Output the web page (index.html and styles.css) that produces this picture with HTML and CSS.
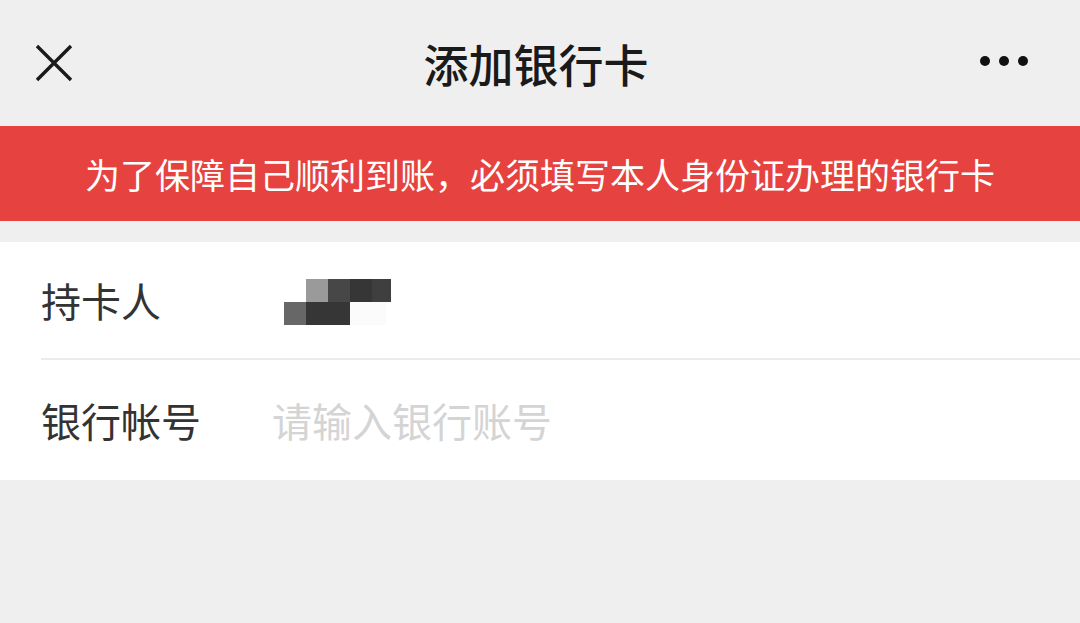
FILE: index.html
```html
<!DOCTYPE html>
<html lang="zh-CN">
<head>
    <meta charset="UTF-8">
    <meta name="viewport" content="width=device-width, initial-scale=1.0">
    <title>添加银行卡</title>
    <link rel="stylesheet" href="styles.css">
</head>
<body>
    <div class="navBar">
        <div class="navBtn closeBtn">
            <svg width="38" height="38" viewBox="0 0 38 38">
                <path d="M2 2 L36 36 M36 2 L2 36" stroke="#1a1a1a" stroke-width="3.4" fill="none"/>
            </svg>
        </div>
        <h1 class="navTitle">添加银行卡</h1>
        <div class="navBtn moreBtn">
            <svg width="50" height="12" viewBox="0 0 50 12">
                <circle cx="6" cy="6" r="5" fill="#111"/>
                <circle cx="25" cy="6" r="5" fill="#111"/>
                <circle cx="44" cy="6" r="5" fill="#111"/>
            </svg>
        </div>
    </div>

    <div class="notice">为了保障自己顺利到账，必须填写本人身份证办理的银行卡</div>

    <div class="formCard">
        <div class="formRow">
            <div class="formLabel">持卡人</div>
            <div class="mosaic">
                <div class="mosaicRow topRow">
                    <span class="m1"></span><span class="m2"></span><span class="m3"></span><span class="m4"></span>
                </div>
                <div class="mosaicRow">
                    <span class="m5"></span><span class="m3 wide"></span><span class="m6"></span>
                </div>
            </div>
        </div>
        <div class="formRow">
            <div class="formLabel">银行帐号</div>
            <input class="formInput" type="text" placeholder="请输入银行账号">
        </div>
    </div>
</body>
</html>
```

FILE: styles.css
```css
body{
    margin: 0;
    background: #efefef;
    font-family: "Noto Sans CJK SC", "Noto Sans", sans-serif;
    width: 1080px;
    height: 623px;
    overflow: hidden;
}

.navBar{
    height: 126px;
    display: grid;
    grid-template-columns: 1fr auto 1fr;
    align-items: center;
    padding: 0 51px 0 35px;
    box-sizing: border-box;
}

.navBtn{
    display: flex;
    align-items: center;
}

.moreBtn{
    justify-content: flex-end;
    margin-top: -4px;
}

.navTitle{
    margin: 0;
    font-size: 45px;
    font-weight: 500;
    color: #1a1a1a;
    transform: translateX(4px);
}

.notice{
    height: 95px;
    background: #e64340;
    color: #fff;
    font-size: 35px;
    display: flex;
    align-items: center;
    justify-content: center;
}

.formCard{
    margin-top: 21px;
    background: #fff;
    padding-left: 41px;
}

.formRow{
    height: 118px;
    display: flex;
    align-items: center;
    border-bottom: 2px solid #ebebeb;
    box-sizing: border-box;
}

.formRow:last-child{
    border-bottom: none;
    height: 120px;
}

.formLabel{
    width: 231px;
    font-size: 40px;
    color: #333;
}

.formInput{
    border: none;
    outline: none;
    font-family: inherit;
    font-size: 40px;
    padding: 0;
    background: transparent;
    flex: 1;
}

.formInput::placeholder{
    color: #d4d4d4;
}

.mosaic{
    margin-left: 12px;
    margin-top: 4px;
}

.mosaicRow{
    display: flex;
    height: 23px;
}

.topRow{
    padding-left: 22px;
}

.mosaicRow span{
    width: 22px;
    height: 23px;
}

.m1{ background: #9a9a9a; }
.m2{ background: #474747; }
.m3{ background: #363636; }
.m4{ background: #3f3f3f; width: 19px !important; }
.m5{ background: #676767; }
.m6{ background: #fbfbfb; width: 36px !important; }
.wide{ width: 44px !important; }
```
